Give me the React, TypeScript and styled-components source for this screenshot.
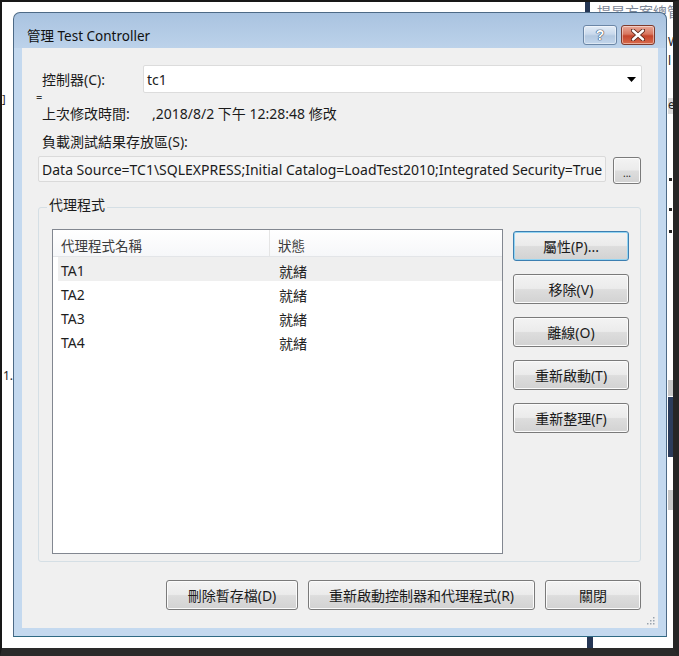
import React from "react";
import styled, { createGlobalStyle } from "styled-components";

const GlobalStyle = createGlobalStyle`
  html, body {
    margin: 0;
    padding: 0;
    background: #fff;
  }
  body {
    font-family: "Noto Sans", "Noto Sans CJK TC", sans-serif;
    font-size: 14px;
    color: #1b1b1b;
  }
`;

const Screen = styled.div`
  position: relative;
  width: 679px;
  height: 656px;
  box-sizing: border-box;
  border-style: solid;
  border-color: #181818 #262626 #2a2a2a #181818;
  border-width: 2px 6px 8px 2px;
  background: #fff;
  padding: 10px 0 0 11px;
  overflow: hidden;
`;

// bits of the window behind the dialog
const Scrap = styled.div<{ $bg?: string }>`
  position: absolute;
  background: ${(p) => p.$bg || "transparent"};
  font-size: 13px;
  line-height: 14px;
  white-space: nowrap;
  color: #222;
`;

const Dialog = styled.div`
  position: relative;
  z-index: 1;
  width: 654px;
  height: 625px;
  box-sizing: border-box;
  border: 1px solid #4d6a86;
  border-bottom-color: #2f6a84;
  border-radius: 7px 7px 0 0;
  background: linear-gradient(#a9c3e0 0px, #bcd2ea 35px, #c4d9ef 35px);
  padding: 0 8px 8px 8px;
  display: flex;
  flex-direction: column;
`;

const TitleBar = styled.div`
  height: 35px;
  box-sizing: border-box;
  padding: 8px 3px 0 5px;
  display: flex;
  align-items: center;
`;

const Title = styled.div`
  flex: 1;
  font-size: 13.5px;
  color: #111;
`;

const CaptionButton = styled.div<{ $close?: boolean }>`
  width: 34px;
  height: 20px;
  box-sizing: border-box;
  margin-left: 4px;
  border: 1px solid ${(p) => (p.$close ? "#7e3a2c" : "#6b86a6")};
  border-radius: 3px;
  background: ${(p) =>
    p.$close
      ? "linear-gradient(#e8a898 0%, #d8765f 45%, #c5452c 55%, #d86a4c 100%)"
      : "linear-gradient(#e4edf7 0%, #c9d9ec 45%, #b3c8e0 55%, #c3d6ec 100%)"};
  box-shadow: inset 0 0 0 1px rgba(255, 255, 255, 0.45);
  display: flex;
  align-items: center;
  justify-content: center;
`;

const HelpGlyph = styled.span`
  font-family: "Liberation Sans", sans-serif;
  font-weight: bold;
  font-size: 14px;
  line-height: 14px;
  color: #fff;
  text-shadow: 0 0 1px #2b3e58, 0 0 1px #2b3e58, 0 0 1px #2b3e58;
`;

const Client = styled.div`
  position: relative;
  flex: 1;
  background: #f0f0f0;
  padding: 17px 17px 18px 16px;
  display: flex;
  flex-direction: column;
`;

const Row = styled.div<{ $h: number; $mt?: number }>`
  display: flex;
  align-items: center;
  height: ${(p) => p.$h}px;
  margin-top: ${(p) => p.$mt || 0}px;
`;

const Label = styled.span<{ $w?: number }>`
  width: ${(p) => (p.$w ? `${p.$w}px` : "auto")};
  flex-shrink: 0;
  box-sizing: border-box;
  padding-left: 4px;
  white-space: nowrap;
`;

const Value = styled.span`
  padding-left: 9px;
  white-space: nowrap;
`;

const Combo = styled.div`
  flex: 1;
  height: 28px;
  margin-right: -1px;
  box-sizing: border-box;
  border: 1px solid #dcdcdc;
  border-radius: 2px;
  background: #fff;
  display: flex;
  align-items: center;
  padding: 0 5px 0 3px;
`;

const ComboText = styled.span`
  flex: 1;
`;

const TextBox = styled.div`
  width: 568px;
  height: 26px;
  box-sizing: border-box;
  border: 1px solid #dadada;
  border-radius: 2px;
  background: #f5f5f5;
  display: flex;
  align-items: center;
  padding-left: 3px;
  white-space: nowrap;
  overflow: hidden;
`;

const Button = styled.button<{ $w?: number; $h?: number; $focused?: boolean }>`
  width: ${(p) => (p.$w ? `${p.$w}px` : "100%")};
  height: ${(p) => p.$h || 30}px;
  flex-shrink: 0;
  box-sizing: border-box;
  padding: 0;
  border: 1px solid ${(p) => (p.$focused ? "#3c7fb1" : "#7a7a7a")};
  border-radius: 3px;
  background: linear-gradient(#f3f3f3 0%, #ebebeb 48%, #dddddd 52%, #d2d2d2 100%);
  box-shadow: inset 0 0 0 1px ${(p) => (p.$focused ? "#93d4f2" : "#fbfbfb")};
  font-family: inherit;
  font-size: 14px;
  color: #1b1b1b;
`;

const BrowseButton = styled(Button)`
  margin-left: 7px;
  margin-top: 2px;
  font-size: 10px;
  padding-top: 6px;
`;

const Group = styled.div`
  position: relative;
  margin-top: 25px;
  width: 603px;
  height: 355px;
  box-sizing: border-box;
  border: 1px solid #d5dfe5;
  border-radius: 3px;
  padding: 21px 11px 7px 13px;
  display: flex;
  gap: 10px;
`;

const Legend = styled.span`
  position: absolute;
  top: -14px;
  left: 8px;
  padding: 0 2px;
  background: #f0f0f0;
`;

const List = styled.div`
  width: 451px;
  height: 325px;
  box-sizing: border-box;
  border: 1px solid #828790;
  background: #fff;
`;

const ListHeader = styled.div`
  display: grid;
  grid-template-columns: 217px 1fr;
  height: 27px;
  box-sizing: border-box;
  border-bottom: 1px solid #e3e5e8;
  background: linear-gradient(#ffffff, #f6f7f9);
  color: #3b3b3b;
  font-size: 13.5px;
`;

const HeaderCell = styled.div<{ $divider?: boolean }>`
  display: flex;
  align-items: center;
  padding: 3px 0 0 8px;
  border-right: ${(p) => (p.$divider ? "1px solid #e5e5e5" : "none")};
`;

const ListRow = styled.div<{ $hot?: boolean }>`
  display: grid;
  grid-template-columns: 212px 1fr;
  height: 24px;
  margin-left: 5px;
  align-items: center;
  background: ${(p) => (p.$hot ? "#efefef" : "transparent")};
  &:first-of-type {
    margin-top: 2px;
    height: 25px;
  }
`;

const Cell = styled.span<{ $pl: number }>`
  padding: 3px 0 0 ${(p) => p.$pl}px;
  color: #1e1e1e;
`;

const SideButtons = styled.div`
  width: 116px;
  padding-top: 2px;
  display: flex;
  flex-direction: column;
  gap: 13px;
`;

const Footer = styled.div`
  margin-top: 18px;
  display: flex;
  justify-content: flex-end;
  gap: 10px;
`;

const Mark = styled.span`
  position: absolute;
  left: 14px;
  top: 41px;
  font-size: 11px;
  color: #333;
`;

const Grip = styled.svg`
  position: absolute;
  right: 3px;
  bottom: 3px;
`;

const agents = ["TA1", "TA2", "TA3", "TA4"];

export default function App() {
  return (
    <Screen>
      <GlobalStyle />
      <Scrap $bg="#253654" style={{ left: 583, top: 0, width: 5, height: 10 }} />
      <Scrap style={{ left: 595, top: 2, color: "#7c8696", fontSize: 14, lineHeight: "16px" }}>
        提昇方案總管
      </Scrap>
      <Scrap style={{ left: 666, top: 33, fontSize: 12 }}>W</Scrap>
      <Scrap style={{ left: 666, top: 52, fontSize: 12 }}>l</Scrap>
      <Scrap $bg="#dcdcdc" style={{ left: 666, top: 96, width: 5, height: 16, fontSize: 12 }}>e</Scrap>
      <Scrap $bg="#222" style={{ left: 667, top: 176, width: 3, height: 3 }} />
      <Scrap $bg="#222" style={{ left: 667, top: 206, width: 3, height: 3 }} />
      <Scrap $bg="#222" style={{ left: 667, top: 228, width: 3, height: 3 }} />
      <Scrap $bg="#c8c8c8" style={{ left: 666, top: 378, width: 5, height: 16 }} />
      <Scrap $bg="#2c3d5c" style={{ left: 666, top: 395, width: 5, height: 60 }} />
      <Scrap $bg="#c8c8c8" style={{ left: 666, top: 488, width: 5, height: 20 }} />
      <Scrap $bg="#253654" style={{ left: 585, top: 634, width: 6, height: 12 }} />
      <Scrap style={{ left: 0, top: 90, fontSize: 11 }}>]</Scrap>
      <Scrap style={{ left: 1, top: 367, fontSize: 12 }}>1.</Scrap>

      <Dialog>
        <TitleBar>
          <Title>管理 Test Controller</Title>
          <CaptionButton>
            <HelpGlyph>?</HelpGlyph>
          </CaptionButton>
          <CaptionButton $close>
            <svg width="14" height="12" viewBox="0 0 14 12">
              <path
                d="M2 1.5 L12 10.5 M12 1.5 L2 10.5"
                stroke="#5a2418"
                strokeWidth="4.2"
                strokeLinecap="round"
              />
              <path
                d="M2 1.5 L12 10.5 M12 1.5 L2 10.5"
                stroke="#fff"
                strokeWidth="2.4"
                strokeLinecap="round"
              />
            </svg>
          </CaptionButton>
        </TitleBar>

        <Client>
          <Mark>=</Mark>
          <Row $h={28}>
            <Label $w={105}>控制器(C):</Label>
            <Combo>
              <ComboText>tc1</ComboText>
              <svg width="9" height="5" viewBox="0 0 9 5">
                <polygon points="0,0 9,0 4.5,5" fill="#000" />
              </svg>
            </Combo>
          </Row>
          <Row $h={20} $mt={10}>
            <Label $w={105}>上次修改時間:</Label>
            <Value>,2018/8/2 下午 12:28:48 修改</Value>
          </Row>
          <Row $h={20} $mt={8}>
            <Label>負載測試結果存放區(S):</Label>
          </Row>
          <Row $h={26} $mt={5}>
            <TextBox>
              Data Source=TC1\SQLEXPRESS;Initial Catalog=LoadTest2010;Integrated Security=True
            </TextBox>
            <BrowseButton $w={28} $h={27}>
              ...
            </BrowseButton>
          </Row>

          <Group>
            <Legend>代理程式</Legend>
            <List>
              <ListHeader>
                <HeaderCell $divider>代理程式名稱</HeaderCell>
                <HeaderCell>狀態</HeaderCell>
              </ListHeader>
              {agents.map((a, i) => (
                <ListRow key={a} $hot={i === 0}>
                  <Cell $pl={3}>{a}</Cell>
                  <Cell $pl={9}>就緒</Cell>
                </ListRow>
              ))}
            </List>
            <SideButtons>
              <Button $focused>屬性(P)...</Button>
              <Button>移除(V)</Button>
              <Button>離線(O)</Button>
              <Button>重新啟動(T)</Button>
              <Button>重新整理(F)</Button>
            </SideButtons>
          </Group>

          <Footer>
            <Button $w={132}>刪除暫存檔(D)</Button>
            <Button $w={227}>重新啟動控制器和代理程式(R)</Button>
            <Button $w={96}>關閉</Button>
          </Footer>

          <Grip width="9" height="9" viewBox="0 0 9 9">
            {[
              [7, 1],
              [7, 4],
              [4, 4],
              [7, 7],
              [4, 7],
              [1, 7],
            ].map(([x, y]) => (
              <rect key={`${x}-${y}`} x={x} y={y} width="1.5" height="1.5" fill="#9aa4ae" />
            ))}
          </Grip>
        </Client>
      </Dialog>
    </Screen>
  );
}
